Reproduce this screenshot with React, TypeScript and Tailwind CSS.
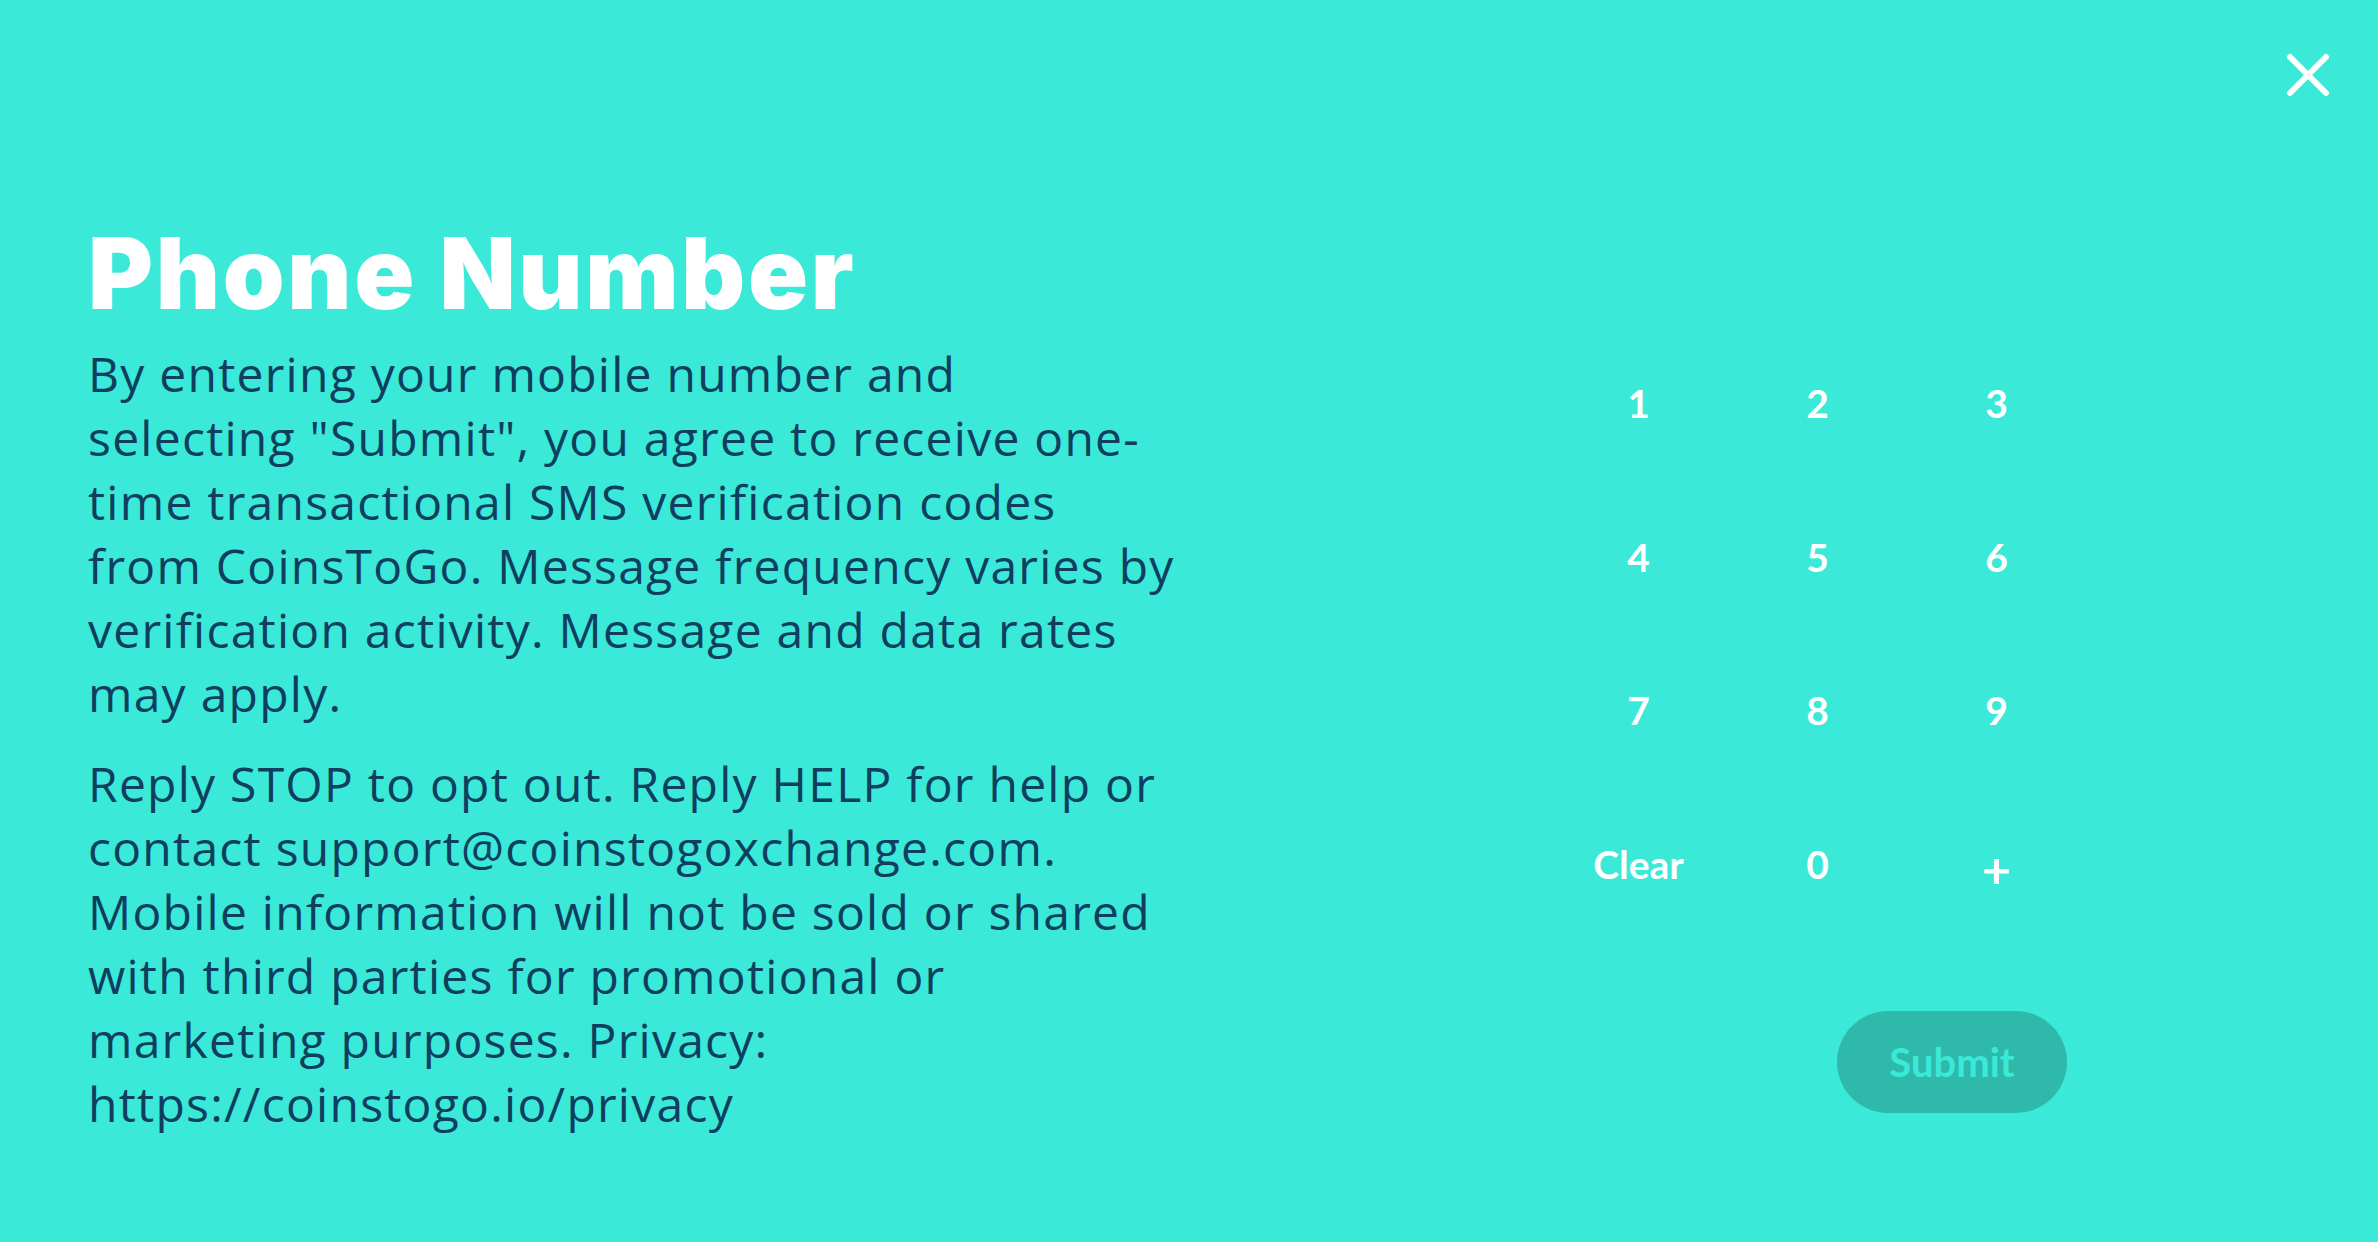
import React from 'react';

const keys = ['1', '2', '3', '4', '5', '6', '7', '8', '9', 'Clear', '0', '+'];

export default function App() {
  return (
    <div className="relative w-[2378px] h-[1242px] overflow-hidden bg-[#3ae9d8]">
      {/* Close */}
      <button className="absolute top-[53px] right-[48px] w-[44px] h-[44px] text-white">
        <svg viewBox="0 0 44 44" width="44" height="44" fill="none" stroke="currentColor" strokeWidth="6" strokeLinecap="round">
          <line x1="4" y1="4" x2="40" y2="40" />
          <line x1="40" y1="4" x2="4" y2="40" />
        </svg>
      </button>

      <div className="flex items-start justify-between pl-[88px] pr-[292px] pt-[224px]">
        {/* Left column */}
        <div className="w-[1120px] shrink-0">
          <h1 className="font-['Inter',sans-serif] font-black text-[99px] leading-none text-white tracking-[2.7px]">
            Phone Number
          </h1>
          <div className="mt-[19px] font-['Open_Sans',sans-serif] text-[48px] leading-[64px] tracking-[1.25px] text-[#0f3e5e] [font-variant-ligatures:none]">
            <p>
              By entering your mobile number and<br />
              selecting "Submit", you agree to receive one-<br />
              time transactional SMS verification codes<br />
              from CoinsToGo. Message frequency varies by<br />
              verification activity. Message and data rates<br />
              may apply.
            </p>
            <p className="mt-[26px]">
              Reply STOP to opt out. Reply HELP for help or<br />
              contact support@coinstogoxchange.com.<br />
              Mobile information will not be sold or shared<br />
              with third parties for promotional or<br />
              marketing purposes. Privacy:<br />
              https://coinstogo.io/privacy
            </p>
          </div>
        </div>

        {/* Keypad */}
        <div className="mt-[103px] flex flex-col">
          <div className="grid grid-cols-[repeat(3,179px)] auto-rows-[153.5px] font-['Lato',sans-serif] font-bold text-[39px] text-white">
            {keys.map((k) => (
              <button key={k} className="flex items-center justify-center leading-none">
                {k === '+' ? <span className="text-[50px] translate-y-[5px]">+</span> : k}
              </button>
            ))}
          </div>
          <div className="mt-[70px] flex justify-end pr-[19px]">
            <button className="w-[230px] h-[102px] rounded-full bg-[#2eb9ab] font-['Lato',sans-serif] font-bold text-[40px] text-[#3ae9d8]">
              Submit
            </button>
          </div>
        </div>
      </div>
    </div>
  );
}
